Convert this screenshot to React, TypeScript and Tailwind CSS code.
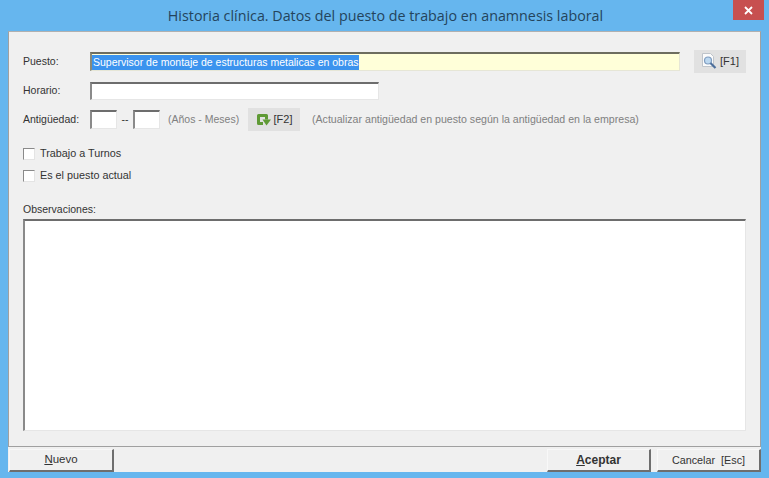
export default function App() {
  const font = "font-['Liberation_Sans',sans-serif] text-[10.5px] text-[#333]";
  const field = 'border-t-2 border-l-2 border-t-[#6d6d6d] border-l-[#8a8a8a] border-b border-r border-b-[#e6e6e6] border-r-[#e6e6e6] bg-white';
  const winBtn =
    'flex items-center justify-center h-[23px] border-t border-l border-t-[#f8f8f8] border-l-[#f8f8f8] border-b-2 border-r-2 border-b-[#6e6e6e] border-r-[#6e6e6e] bg-[#f0f0f0]';

  return (
    <div className={`relative w-[769px] h-[478px] bg-[#66b6ee] overflow-hidden ${font}`}>
      {/* Title bar */}
      <div className="h-[31px] pl-[2px] flex items-center justify-center font-['Open_Sans',sans-serif] text-[14.3px] text-[#24445c]">
        Historia clínica. Datos del puesto de trabajo en anamnesis laboral
      </div>
      <div className="absolute top-0 left-[733px] w-[31px] h-[20px] bg-[#c75050] flex items-center justify-center">
        <svg width="9" height="9" viewBox="0 0 9 9">
          <path d="M1 1l7 7M8 1l-7 7" stroke="#fff" strokeWidth="1.8" />
        </svg>
      </div>

      <div className="ml-[8px] w-[753px] h-[441px] bg-[#f0f0f0] flex flex-col">
        {/* Main panel */}
        <div className="h-[416px] border border-[#a0a0a0] border-t-[#b0b0b0] pl-[14px] flex flex-col">
          <div className="flex items-center h-[23px] mt-[18px]">
            <label className="w-[67px]">Puesto:</label>
            <div className="w-[590px] h-[19px] border-t-2 border-l-2 border-t-[#6d6d5f] border-l-[#8a8a7a] border-b border-r border-b-[#e6e6d6] border-r-[#e6e6d6] bg-[#ffffd9] flex items-center">
              <span className="bg-[#3b93ee] text-white h-[15px] leading-[15px] whitespace-nowrap pl-[1px]">
                Supervisor de montaje de estructuras metalicas en obras
              </span>
            </div>
            <button className="ml-[14px] w-[52px] h-[23px] bg-[#e1e1e1] flex items-center justify-center gap-[3px] text-[#333]">
              <svg width="16" height="17" viewBox="0 0 16 17">
                <path d="M1.500 0.500h8l3 3v10h-11z" fill="#fbfbfb" stroke="#bfc4ca" />
                <circle cx="7" cy="7.500" r="3.500" fill="#bcd8f0" stroke="#7f9cbf" strokeWidth="1.2" />
                <path d="M9.500 10l5 5" stroke="#4d6f9c" strokeWidth="2.2" />
              </svg>
              <span className="text-[11px]">[F1]</span>
            </button>
          </div>

          <div className="flex items-center h-[18px] mt-[9px]">
            <label className="w-[67px]">Horario:</label>
            <div className={`w-[289px] h-[18px] ${field}`} />
          </div>

          <div className="flex items-center h-[23px] mt-[8px]">
            <label className="w-[67px]">Antigüedad:</label>
            <div className={`w-[27px] h-[19px] ${field}`} />
            <span className="w-[16px] text-center">--</span>
            <div className={`w-[27px] h-[19px] ${field}`} />
            <span className="ml-[8px] w-[72px] text-[#808080] whitespace-nowrap">(Años - Meses)</span>
            <button className="ml-[8px] w-[52px] h-[23px] bg-[#e1e1e1] flex items-center justify-center gap-[2px] text-[#333]">
              <svg width="16" height="14" viewBox="0 0 16 14">
                <path d="M7 10.500H2.500V2.500H10.500V6.500" fill="none" stroke="#5f9a35" strokeWidth="3" strokeLinejoin="round" />
                <path d="M6.500 6.500H15L10.500 12.500z" fill="#5f9a35" />
              </svg>
              <span className="text-[11px]">[F2]</span>
            </button>
            <span className="ml-[12px] text-[10.6px] text-[#808080] whitespace-nowrap">
              (Actualizar antigüedad en puesto según la antigüedad en la empresa)
            </span>
          </div>

          <div className="flex items-center h-[13px] mt-[16px]">
            <div className="w-[12px] h-[12px] border border-[#8a8a8a] border-r-[#e4e4e4] border-b-[#e4e4e4] bg-white" />
            <span className="ml-[5px] text-[10.8px]">Trabajo a Turnos</span>
          </div>
          <div className="flex items-center h-[13px] mt-[9px]">
            <div className="w-[12px] h-[12px] border border-[#8a8a8a] border-r-[#e4e4e4] border-b-[#e4e4e4] bg-white" />
            <span className="ml-[5px] text-[10.8px]">Es el puesto actual</span>
          </div>

          <div className="mt-[20px] h-[15px] leading-[15px]">Observaciones:</div>
          <div className={`w-[723px] h-[212px] mt-[2px] ${field}`} />
        </div>

        {/* Footer buttons */}
        <div className="flex mt-[2px]">
          <button className={`${winBtn} w-[106px] ml-[1px] text-[11.5px]`}>
            <span className="underline">N</span>uevo
          </button>
          <button className={`${winBtn} w-[105px] ml-[433px] font-bold text-[12px]`}>
            <span className="underline">A</span>ceptar
          </button>
          <button className={`${winBtn} w-[105px] ml-[6px] text-[10.8px]`}>Cancelar&nbsp;&nbsp;[Esc]</button>
        </div>
      </div>
    </div>
  );
}
